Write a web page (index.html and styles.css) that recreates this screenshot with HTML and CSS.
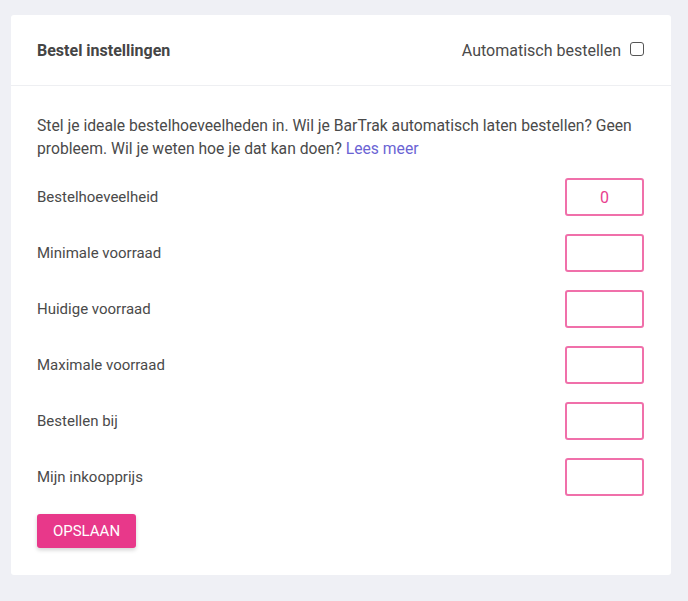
FILE: index.html
```html
<!DOCTYPE html>
<html lang="nl">
<head>
<meta charset="utf-8">
<title>Bestel instellingen</title>
<link rel="stylesheet" href="styles.css">
</head>
<body>
<div class="card">
  <div class="card-header">
    <h2 class="title">Bestel instellingen</h2>
    <label class="auto">Automatisch bestellen <span class="checkbox"></span></label>
  </div>
  <div class="card-body">
    <p class="intro">Stel je ideale bestelhoeveelheden in. Wil je BarTrak automatisch laten bestellen? Geen probleem. Wil je weten hoe je dat kan doen? <a class="link" href="#">Lees meer</a></p>
    <div class="rows">
      <div class="row"><span class="label">Bestelhoeveelheid</span><span class="input">0</span></div>
      <div class="row"><span class="label">Minimale voorraad</span><span class="input"></span></div>
      <div class="row"><span class="label">Huidige voorraad</span><span class="input"></span></div>
      <div class="row"><span class="label">Maximale voorraad</span><span class="input"></span></div>
      <div class="row"><span class="label">Bestellen bij</span><span class="input"></span></div>
      <div class="row"><span class="label">Mijn inkoopprijs</span><span class="input"></span></div>
    </div>
    <button class="btn">OPSLAAN</button>
  </div>
</div>
</body>
</html>
```
FILE: styles.css
```css
html, body {
  margin: 0;
  padding: 0;
}
body {
  background: #eff0f5;
  font-family: Roboto, "Liberation Sans", sans-serif;
  color: #4a4a4a;
  padding: 15px 17px 26px 11px;
}
.card {
  background: #ffffff;
  border-radius: 3px;
  width: 660px;
  box-sizing: border-box;
}
.card-header {
  height: 71px;
  border-bottom: 1px solid #eeeff2;
  display: flex;
  align-items: center;
  justify-content: space-between;
  padding: 0 27px 0 26px;
  box-sizing: border-box;
}
.title {
  margin: 0;
  font-size: 16px;
  font-weight: 700;
  color: #454545;
  padding-top: 1px;
}
.auto {
  display: flex;
  align-items: center;
  font-size: 16px;
  color: #4a4a4a;
  gap: 9px;
}
.checkbox {
  width: 12px;
  height: 12px;
  border: 1px solid #555;
  border-radius: 3px;
  display: inline-block;
  margin-top: -3px;
}
.card-body {
  padding: 28px 27px 27px 26px;
}
.intro {
  margin: 0;
  font-size: 15.7px;
  line-height: 23px;
  color: #4a4a4a;
}
.link {
  color: #6b64d4;
  text-decoration: none;
}
.rows {
  margin-top: 18px;
  display: flex;
  flex-direction: column;
  gap: 18px;
}
.row {
  display: flex;
  align-items: center;
  justify-content: space-between;
}
.label {
  font-size: 15px;
  color: #4a4a4a;
}
.input {
  width: 79px;
  height: 38px;
  box-sizing: border-box;
  border: 2px solid #f070aa;
  border-radius: 3px;
  display: flex;
  align-items: center;
  justify-content: center;
  color: #e8408e;
  font-size: 16px;
}
.btn {
  margin-top: 18px;
  width: 99px;
  height: 34px;
  background: #e8388a;
  color: #fff;
  border: none;
  border-radius: 3px;
  font-family: Roboto, "Liberation Sans", sans-serif;
  font-size: 15px;
  box-shadow: 0 2px 4px rgba(0,0,0,0.18);
  display: block;
}
```
